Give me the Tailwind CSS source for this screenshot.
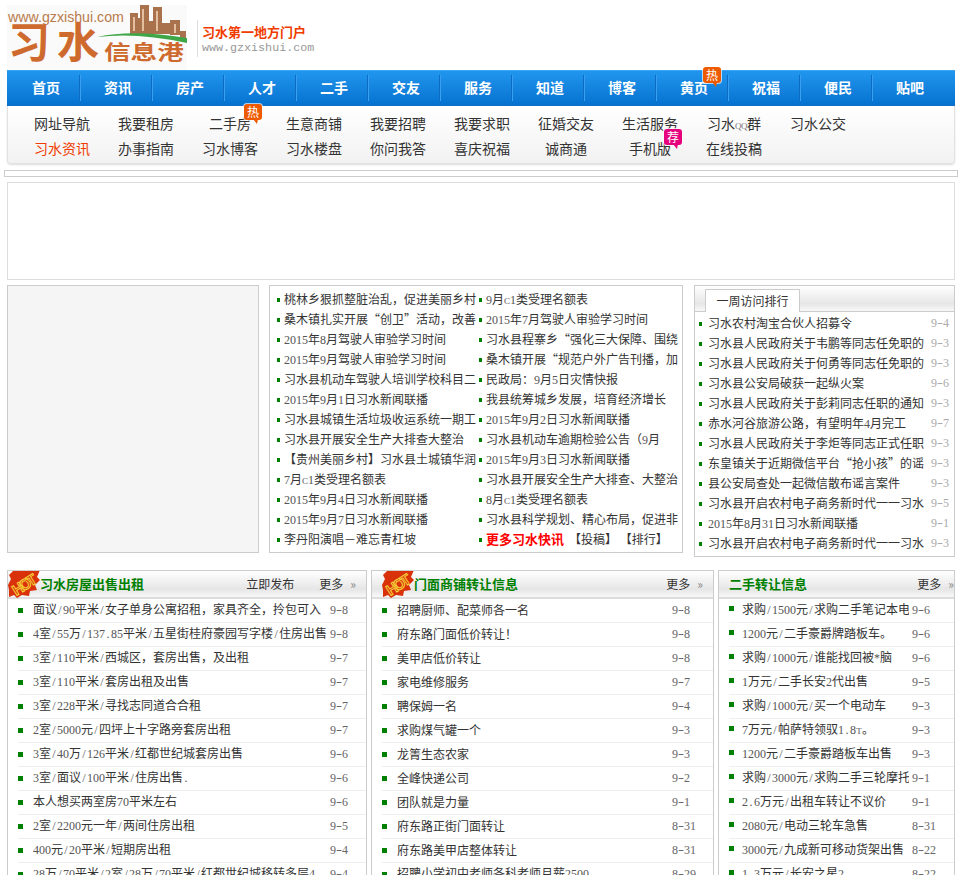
<!DOCTYPE html>
<html lang="zh-CN">

<head>
    <meta charset="UTF-8">
    <script src="https://cdn.jsdelivr.net/npm/@tailwindcss/browser@4"></script>
    <title>习水信息港</title>
</head>

<body class="bg-white text-[12px] text-[#333] font-['Noto_Sans_CJK_SC','Liberation_Sans',sans-serif] overflow-hidden h-[875px]">
    <div class="ml-[7px] w-[948px]">
        <!-- 顶部 logo -->
        <header class="flex items-start h-[65px] mt-[5px]">
            <svg width="180" height="65" viewBox="0 0 180 65" class="block bg-[#fafafa]">
                <g fill="#a9714c">
                    <rect x="123" y="8" width="8" height="22" />
                    <rect x="131" y="13" width="2" height="17" />
                    <rect x="133" y="0" width="9" height="29" />
                    <rect x="142" y="16" width="4" height="13" />
                    <rect x="146" y="2" width="9" height="27" />
                    <rect x="155" y="18" width="8" height="11" />
                    <rect x="163" y="15" width="10" height="15" />
                    <rect x="173" y="26" width="6" height="8" />
                </g>
                <g fill="#e3bfa0">
                    <rect x="135" y="4" width="2" height="22" />
                    <rect x="149" y="6" width="2" height="20" />
                    <rect x="126" y="12" width="2" height="14" />
                    <rect x="167" y="19" width="2" height="9" />
                </g>
                <path d="M90 32 Q126 24 180 33 L180 38 Q130 27 90 32 Z" fill="#3fa648" />
                <text x="1" y="17" font-family="Liberation Sans" font-size="14.2" fill="#b97a4c">www.gzxishui.com</text>
                <text x="1" y="53" font-family="Noto Sans CJK SC" font-weight="700" font-size="42" fill="#cf6a2e">习</text>
                <text x="50" y="53" font-family="Noto Sans CJK SC" font-weight="700" font-size="42" fill="#cf6a2e">水</text>
                <text transform="translate(97 55) scale(1.33 1)" font-family="Noto Sans CJK SC" font-weight="700" font-size="20" fill="#cf6a2e">信息港</text>
            </svg>
            <div class="ml-[10px] mt-[15px] h-[37px] pl-[4px] border-l border-[#ddd]">
                <p class="text-[13px] leading-[24px] font-bold text-[#f03c00]">习水第一地方门户</p>
                <p class="-mt-[2px] text-[11.7px] leading-[12px] text-[#999] font-['Liberation_Mono',monospace]">www.gzxishui.com</p>
            </div>
        </header>

        <!-- 主导航 -->
        <nav id="main-nav" class="flex items-center h-[36px] pl-px border-t border-[#3ba3f2] border-b border-b-[#0468c8] bg-linear-to-b from-[#2196ee] to-[#0572d0] text-white text-[14px] font-bold"></nav>

        <!-- 子导航 -->
        <div id="sub-nav" class="grid grid-cols-[repeat(10,84px)] auto-rows-[25px] h-[58px] pt-[5px] pl-[12px] rounded-b-[4px] border-x border-b border-[#e2e2e2] shadow-[0_1px_2px_#ddd] bg-linear-to-b from-white to-[#f2f2f2] text-[14px] text-center"></div>

        <div class="-mx-[3px] mt-[6px] h-[7px] border border-[#ccc]"></div>
        <div class="mt-[5px] h-[98px] border border-[#ddd]"></div>

        <!-- 新闻区 -->
        <section class="flex items-start mt-[5px]">
            <div class="w-[252px] h-[268px] border border-[#ccc] bg-[#f5f5f5]"></div>
            <div id="news" class="ml-[10px] w-[414px] h-[268px] pt-[3px] pl-[7px] border border-[#ccc] grid grid-cols-[202px_200px] auto-rows-[20px]"></div>
            <div class="ml-[11px] w-[261px] h-[272px] border border-[#ccc]">
                <div class="h-[26px] pl-[10px] pt-[3px] border-b border-[#ccc] bg-linear-to-b from-white via-[#e6e6e6] via-70% to-[#f8f8f8]">
                    <div class="w-[95px] h-[23px] -mb-px bg-white border border-b-0 border-[#ccc] text-center leading-[21px]">一周访问排行</div>
                </div>
                <ul id="rank" class="pt-px"></ul>
            </div>
        </section>

        <!-- 分类信息 -->
        <section class="flex items-start mt-[13px]">
            <div class="w-[360px]" data-panel="house"></div>
            <div class="ml-[4px] w-[343px]" data-panel="shop"></div>
            <div class="ml-[4px] w-[237px]" data-panel="used"></div>
        </section>
    </div>

    <script>
        const navItems = ['首页', '资讯', '房产', '人才', '二手', '交友', '服务', '知道', '博客', '黄页', '祝福', '便民', '贴吧'];
        const subItems = ['网址导航', '我要租房', '二手房', '生意商铺', '我要招聘', '我要求职', '征婚交友', '生活服务', '习水QQ群', '习水公交',
            '习水资讯', '办事指南', '习水博客', '习水楼盘', '你问我答', '喜庆祝福', '诚商通', '手机版', '在线投稿'];

        const news = [
            '桃林乡狠抓整脏治乱，促进美丽乡村', '9月C1类受理名额表',
            '桑木镇扎实开展“创卫”活动，改善', '2015年7月驾驶人审验学习时间',
            '2015年8月驾驶人审验学习时间', '习水县程寨乡“强化三大保障、围绕',
            '2015年9月驾驶人审验学习时间', '桑木镇开展“规范户外广告刊播，加',
            '习水县机动车驾驶人培训学校科目二', '民政局：9月5日灾情快报',
            '2015年9月1日习水新闻联播', '我县统筹城乡发展，培育经济增长',
            '习水县城镇生活垃圾收运系统一期工', '2015年9月2日习水新闻联播',
            '习水县开展安全生产大排查大整治', '习水县机动车逾期检验公告（9月',
            '【贵州美丽乡村】习水县土城镇华润', '2015年9月3日习水新闻联播',
            '7月C1类受理名额表', '习水县开展安全生产大排查、大整治',
            '2015年9月4日习水新闻联播', '8月C1类受理名额表',
            '2015年9月7日习水新闻联播', '习水县科学规划、精心布局，促进非',
            '李丹阳演唱－难忘青杠坡'
        ];

        const rank = [
            ['习水农村淘宝合伙人招募令', '9-4'], ['习水县人民政府关于韦鹏等同志任免职的', '9-3'],
            ['习水县人民政府关于何勇等同志任免职的', '9-3'], ['习水县公安局破获一起纵火案', '9-6'],
            ['习水县人民政府关于彭莉同志任职的通知', '9-3'], ['赤水河谷旅游公路，有望明年4月完工', '9-7'],
            ['习水县人民政府关于李炬等同志正式任职', '9-3'], ['东皇镇关于近期微信平台“抢小孩”的谣', '9-3'],
            ['县公安局查处一起微信散布谣言案件', '9-3'], ['习水县开启农村电子商务新时代一一习水', '9-5'],
            ['2015年8月31日习水新闻联播', '9-1'], ['习水县开启农村电子商务新时代一一习水', '9-3']
        ];

        const panels = {
            house: {
                title: '习水房屋出售出租', hot: 'left-0', publish: true, more: 'ml-[25px] mr-[10px]', head: 'pl-[32px]',
                text: 'w-[294px] ml-[10px]', bulletY: 'translate-y-px',
                rows: [
                    ['面议/90平米/女子单身公寓招租，家具齐全，拎包可入', '9-8'], ['4室/55万/137.85平米/五星街桂府豪园写字楼/住房出售', '9-8'],
                    ['3室/110平米/西城区，套房出售，及出租', '9-7'], ['3室/110平米/套房出租及出售', '9-7'],
                    ['3室/228平米/寻找志同道合合租', '9-7'], ['2室/5000元/四坪上十字路旁套房出租', '9-7'],
                    ['3室/40万/126平米/红都世纪城套房出售', '9-6'], ['3室/面议/100平米/住房出售.', '9-6'],
                    ['本人想买两室房70平米左右', '9-6'], ['2室/2200元一年/两间住房出租', '9-5'],
                    ['400元/20平米/短期房出租', '9-4'], ['28万/70平米/2室/28万/70平米/红都世纪城移转多层4', '9-4']
                ]
            },
            shop: {
                title: '门面商铺转让信息', hot: 'left-[10px]', publish: false, more: 'mr-[10px]', head: 'pl-[42px]',
                text: 'w-[272px] ml-[10px]', bulletY: 'translate-y-px',
                rows: [
                    ['招聘厨师、配菜师各一名', '9-8'], ['府东路门面低价转让！', '9-8'], ['美甲店低价转让', '9-8'], ['家电维修服务', '9-7'],
                    ['聘保姆一名', '9-4'], ['求购煤气罐一个', '9-3'], ['龙箐生态农家', '9-3'], ['全峰快递公司', '9-2'],
                    ['团队就是力量', '9-1'], ['府东路正街门面转让', '8-31'], ['府东路美甲店整体转让', '8-31'], ['招聘小学初中老师各科老师月薪2500', '8-29']
                ]
            },
            used: {
                title: '二手转让信息', hot: '', publish: false, more: '', head: 'pl-[10px]',
                text: 'w-[167px] ml-[8px]', bulletY: '-translate-y-px',
                rows: [
                    ['求购/1500元/求购二手笔记本电', '9-6'], ['1200元/二手豪爵牌踏板车。', '9-6'], ['求购/1000元/谁能找回被*脑', '9-6'],
                    ['1万元/二手长安2代出售', '9-5'], ['求购/1000元/买一个电动车', '9-3'], ['7万元/帕萨特领驭1.8T。', '9-3'],
                    ['1200元/二手豪爵踏板车出售', '9-3'], ['求购/3000元/求购二手三轮摩托', '9-1'], ['2.6万元/出租车转让不议价', '9-1'],
                    ['2080元/电动三轮车急售', '8-31'], ['3000元/九成新可移动货架出售', '8-22'], ['1.3万元/长安之星2', '8-22']
                ]
            }
        };

        // 半角字符按宋体的 6px 宽排，大写字母缩小才放得下
        function t(text, color = 'text-[#555]') {
            return text.replace(/[\x21-\x7e]/g, c => {
                const extra = c === '-' ? 'scale-x-150' : /[A-Z]/.test(c) ? 'text-[9px]' : '';
                return `<span class="inline-block w-[6px] text-center ${extra} ${color} font-['Liberation_Serif',serif]">${c}</span>`;
            });
        }

        function hotTag(label, pos, color) {
            return `<span class="absolute ${pos} w-[18px] h-[16px] rounded-[3px] ${color} text-white text-[12px] leading-[15px] font-normal text-center shadow-[0_0_0_1px_#ffffffaa]">${label}<i class="absolute left-[9px] top-[15px] w-0 h-0 border-t-[5px] border-l-[4px] border-l-transparent border-r-[1px] border-r-transparent ${color === 'bg-[#e6007e]' ? 'border-t-[#e6007e]' : 'border-t-[#ee5a00]'}"></i></span>`;
        }

        document.getElementById('main-nav').innerHTML = navItems.map((name, i) => {
            const sep = i < navItems.length - 1 ? 'border-r border-[#0b6cc2] shadow-[1px_0_0_#3a9ff0]' : '';
            const tag = name === '黄页' ? hotTag('热', 'left-[47px] -top-[8px]', 'bg-[#ee5a00]') : '';
            return `<div class="relative w-[72px] h-[26px] pl-[24px] leading-[25px] ${sep}">${name}${tag}</div>`;
        }).join('');

        document.getElementById('sub-nav').innerHTML = subItems.map(name => {
            const tag = name === '二手房' ? hotTag('热', 'left-[56px] -top-[7px]', 'bg-[#ee5a00]')
                : name === '手机版' ? hotTag('荐', 'left-[56px] -top-[7px]', 'bg-[#e6007e]') : '';
            const color = name === '习水资讯' ? 'text-[#f03c00]' : '';
            return `<div class="relative leading-[25px] ${color}">${t(name, 'text-[#777]')}${tag}</div>`;
        }).join('');

        const bullet3 = 'shrink-0 w-[3px] h-[4px] bg-[#008000]';
        document.getElementById('news').innerHTML = news.map(item =>
            `<div class="flex items-center whitespace-nowrap overflow-hidden"><i class="${bullet3} mr-[4px] translate-y-px"></i><span>${t(item)}</span></div>`
        ).join('') + `<div class="flex items-center whitespace-nowrap"><i class="${bullet3} mr-[4px] translate-y-px"></i><b class="text-[13px] text-[#f00] mr-[5px]">更多习水快讯</b>【投稿】 【排行】</div>`;

        document.getElementById('rank').innerHTML = rank.map(([title, date]) =>
            `<li class="flex items-center h-[20px] pl-[4px] whitespace-nowrap"><i class="${bullet3} mr-[6px] translate-y-px"></i><span class="w-[223px] overflow-hidden">${t(title)}</span>${t(date, 'text-[#aaa]')}</li>`
        ).join('');

        const hotBadge = `<svg width="33" height="28" viewBox="0 0 33 28" class="absolute left-0 -top-px">
            <polygon points="5,1 32,0 29,7 32,10 27,15 29,20 22,21 21,26 14,25 9,28 6,25 1,27 1,20 0,15 3,9 1,5" fill="#d9320a" />
            <text x="3" y="20" transform="rotate(-32 16 14)" font-family="Liberation Sans" font-weight="700" font-size="15" fill="none" stroke="#f7d33a" stroke-width="1" textLength="26">HOT</text>
        </svg>`;

        document.querySelectorAll('[data-panel]').forEach(box => {
            const p = panels[box.dataset.panel];
            const rows = p.rows.map(([title, date]) =>
                `<li class="flex items-center h-[24px] pb-[2px] ml-[10px] border-b border-[#eee] whitespace-nowrap"><i class="shrink-0 w-[5px] h-[5px] bg-[#008000] ${p.bulletY}"></i><span class="${p.text} overflow-hidden">${t(title)}</span><span class="ml-[3px]">${t(date, 'text-[#666]')}</span></li>`
            ).join('');
            box.innerHTML = `<div class="h-[305px] border border-[#ccc] border-b-0 overflow-hidden">
                <div class="relative flex items-center h-[28px] ${p.head} border-b-2 border-[#ddd] bg-linear-to-b from-white via-[#e6e6e6] via-70% to-[#f8f8f8]">
                    ${p.hot ? `<div class="absolute ${p.hot} top-0 w-[33px] h-[28px]">${hotBadge}</div>` : ''}
                    <b class="text-[13px] text-[#008000]">${p.title}</b>
                    <span class="ml-auto">${p.publish ? '立即发布' : ''}</span>
                    <span class="${p.more}">更多<span class="ml-[7px] text-[#888]">»</span></span>
                </div>
                <ul>${rows}</ul>
            </div>`;
        });
    </script>
</body>

</html>
